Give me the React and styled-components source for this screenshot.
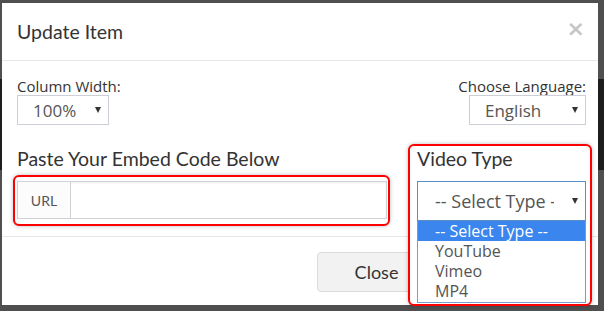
import React from "react";
import styled, { createGlobalStyle } from "styled-components";

const GlobalStyle = createGlobalStyle`
  body {
    margin: 0;
    background: linear-gradient(#4f4f4f 0 79px, #1d1d1d 79px 170px, #4f4f4f 170px);
    font-family: Lato, "Open Sans", sans-serif;
  }
`;

const Backdrop = styled.div`
  box-sizing: border-box;
  height: 311px;
  padding: 3px 6px 6px 2px;
`;

const Modal = styled.div`
  width: 596px;
  height: 302px;
  background: #fff;
  display: flex;
  flex-direction: column;
`;

const Header = styled.div`
  box-sizing: border-box;
  height: 58px;
  padding: 0 15px;
  border-bottom: 1px solid #e8e8e8;
  display: flex;
  align-items: center;
  justify-content: space-between;
`;

const Title = styled.span`
  font-size: 19.5px;
  line-height: 24px;
  color: #333;
`;

const CloseX = styled.span`
  font-family: "DejaVu Sans", sans-serif;
  font-size: 22px;
  font-weight: bold;
  color: #c6c6c6;
  margin-right: -2px;
  margin-top: -7px;
`;

const Body = styled.div`
  padding: 16px 12px 9px 15px;
`;

const Row = styled.div`
  display: flex;
  justify-content: space-between;
  align-items: flex-start;
  margin-top: ${(p) => p.mt || 0}px;
`;

const Field = styled.div`
  display: flex;
  flex-direction: column;
  align-items: ${(p) => (p.right ? "flex-end" : "flex-start")};
`;

const Label = styled.div`
  font-family: "Open Sans", sans-serif;
  font-size: 15px;
  line-height: 18px;
  color: #333;
`;

const Select = styled.div`
  box-sizing: border-box;
  position: relative;
  width: ${(p) => p.w}px;
  height: ${(p) => p.h || 30}px;
  border: 1px solid ${(p) => (p.focus ? "#5a8fc8" : "#ccd0d6")};
  padding-left: ${(p) => p.pl || 15}px;
  display: flex;
  align-items: center;
  font-family: "Open Sans", sans-serif;
  font-size: ${(p) => p.fs || 17}px;
  color: #555;
  white-space: nowrap;
  overflow: hidden;
  background: #fff;

  &::after {
    content: "";
    position: absolute;
    right: 7px;
    top: 50%;
    margin-top: -3px;
    border-left: 3.5px solid transparent;
    border-right: 3.5px solid transparent;
    border-top: 6px solid #333;
  }
`;

const SelectText = styled.span`
  display: block;
  width: ${(p) => p.w}px;
  overflow: hidden;
`;

const Heading = styled.div`
  font-size: 19.5px;
  line-height: 24px;
  color: #333;
`;

const LeftCol = styled.div`
  margin-top: 3px;
  width: 377px;
  margin-left: -4px;
`;

const HeadingPad = styled.div`
  padding-left: 4px;
  margin-bottom: 4px;
`;

const RedFrame = styled.div`
  box-sizing: border-box;
  border: 2px solid #ff0000;
  border-radius: 6px;
  box-shadow: 0 0 4px rgba(0, 0, 0, 0.25);
  background: #fff;
  padding: ${(p) => p.pad};
`;

const InputGroup = styled.div`
  display: flex;
  height: 38px;
  box-sizing: border-box;
  border: 1px solid #cfd3d8;
  box-shadow: inset 0 1px 2px rgba(0, 0, 0, 0.08);
`;

const Addon = styled.div`
  width: 52px;
  border-right: 1px solid #cfd3d8;
  display: flex;
  align-items: center;
  justify-content: center;
  font-size: 14px;
  color: #555;
  background: #fcfcfc;
`;

const Input = styled.div`
  flex: 1;
`;

const RightCol = styled.div`
  position: relative;
  z-index: 2;
  width: 184px;
  margin-right: -6px;
  margin-bottom: -79px;
`;

const VideoSelectWrap = styled.div`
  margin-top: 10px;
`;

const OptionList = styled.div`
  box-sizing: border-box;
  width: 169px;
  border: 1px solid #7b9cc9;
  border-top: none;
  padding-bottom: 1px;
  font-family: "Open Sans", sans-serif;
  font-size: 16px;
  background: #fff;
`;

const Option = styled.div`
  height: 20px;
  line-height: 20px;
  padding-left: 17px;
  color: ${(p) => (p.active ? "#fff" : "#555")};
  background: ${(p) => (p.active ? "#3a86ee" : "transparent")};
`;

const Footer = styled.div`
  border-top: 1px solid #e8e8e8;
  padding: 15px 15px 0 0;
  display: flex;
  justify-content: flex-end;
  gap: 5px;
`;

const Button = styled.button`
  box-sizing: border-box;
  width: ${(p) => p.w}px;
  height: 40px;
  border: 1px solid #dcdcdc;
  border-radius: 4px;
  background: ${(p) => (p.primary ? "#2a8bd8" : "#f2f2f2")};
  color: ${(p) => (p.primary ? "#fff" : "#333")};
  font-family: Lato, sans-serif;
  font-size: 18px;
  padding: 0;
`;

const options = ["-- Select Type --", "YouTube", "Vimeo", "MP4"];

export default function App() {
  return (
    <Backdrop>
      <GlobalStyle />
      <Modal>
        <Header>
          <Title>Update Item</Title>
          <CloseX>×</CloseX>
        </Header>
        <Body>
          <Row>
            <Field>
              <Label>Column Width:</Label>
              <Select w={92}>100%</Select>
            </Field>
            <Field right>
              <Label>Choose Language:</Label>
              <Select w={117}>English</Select>
            </Field>
          </Row>
          <Row mt={19}>
            <LeftCol>
              <HeadingPad>
                <Heading>Paste Your Embed Code Below</Heading>
              </HeadingPad>
              <RedFrame pad="4px 1px 5px 2px">
                <InputGroup>
                  <Addon>URL</Addon>
                  <Input />
                </InputGroup>
              </RedFrame>
            </LeftCol>
            <RightCol>
              <RedFrame pad="1px 4px 1px 7px">
                <Heading>Video Type</Heading>
                <VideoSelectWrap>
                  <Select w={169} h={40} pl={17} fs={18} focus>
                    <SelectText w={119}>-- Select Type --</SelectText>
                  </Select>
                  <OptionList>
                    {options.map((o, i) => (
                      <Option key={o} active={i === 0}>
                        {o}
                      </Option>
                    ))}
                  </OptionList>
                </VideoSelectWrap>
              </RedFrame>
            </RightCol>
          </Row>
        </Body>
        <Footer>
          <Button w={119}>Close</Button>
          <Button w={142} primary>
            Save
          </Button>
        </Footer>
      </Modal>
    </Backdrop>
  );
}
